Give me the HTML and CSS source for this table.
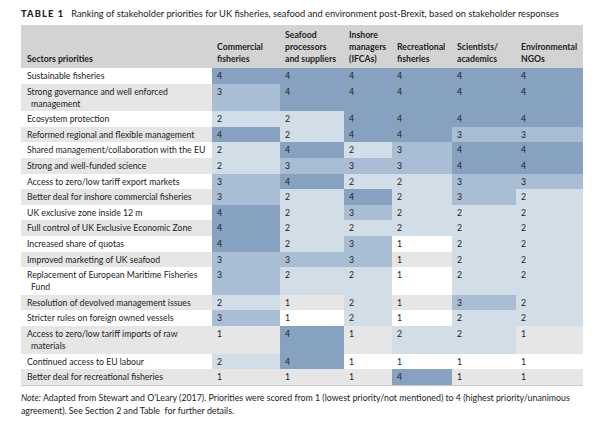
FILE: index.html
```html
<!DOCTYPE html>
<html>
<head>
<meta charset="utf-8">
<link rel="stylesheet" href="styles.css">
</head>
<body>
<div class="page">
  <div class="caption"><span class="label">TABLE 1</span><span class="ctext">Ranking of stakeholder priorities for UK fisheries, seafood and environment post-Brexit, based on stakeholder responses</span></div>
  <table class="tbl">
    <colgroup>
      <col class="c0"><col class="c1"><col class="c2"><col class="c3"><col class="c4"><col class="c5"><col class="c6">
    </colgroup>
    <thead>
      <tr>
        <th>Sectors priorities</th>
        <th>Commercial<br>fisheries</th>
        <th>Seafood<br>processors<br>and suppliers</th>
        <th>Inshore<br>managers<br>(IFCAs)</th>
        <th>Recreational<br>fisheries</th>
        <th>Scientists/<br>academics</th>
        <th>Environmental<br>NGOs</th>
      </tr>
    </thead>
    <tbody>
      <tr><td class="lbl">Sustainable fisheries</td><td class="v4">4</td><td class="v4">4</td><td class="v4">4</td><td class="v4">4</td><td class="v4">4</td><td class="v4">4</td></tr>
      <tr class="alt"><td class="lbl">Strong governance and well enforced management</td><td class="v3">3</td><td class="v4">4</td><td class="v4">4</td><td class="v4">4</td><td class="v4">4</td><td class="v4">4</td></tr>
      <tr><td class="lbl">Ecosystem protection</td><td class="v2">2</td><td class="v2">2</td><td class="v4">4</td><td class="v4">4</td><td class="v4">4</td><td class="v4">4</td></tr>
      <tr class="alt"><td class="lbl">Reformed regional and flexible management</td><td class="v4">4</td><td class="v2">2</td><td class="v4">4</td><td class="v4">4</td><td class="v3">3</td><td class="v3">3</td></tr>
      <tr><td class="lbl">Shared management/collaboration with the EU</td><td class="v2">2</td><td class="v4">4</td><td class="v2">2</td><td class="v3">3</td><td class="v4">4</td><td class="v4">4</td></tr>
      <tr class="alt"><td class="lbl">Strong and well-funded science</td><td class="v2">2</td><td class="v3">3</td><td class="v3">3</td><td class="v3">3</td><td class="v4">4</td><td class="v4">4</td></tr>
      <tr><td class="lbl">Access to zero/low tariff export markets</td><td class="v3">3</td><td class="v4">4</td><td class="v2">2</td><td class="v2">2</td><td class="v3">3</td><td class="v3">3</td></tr>
      <tr class="alt"><td class="lbl">Better deal for inshore commercial fisheries</td><td class="v3">3</td><td class="v2">2</td><td class="v4">4</td><td class="v2">2</td><td class="v3">3</td><td class="v2">2</td></tr>
      <tr><td class="lbl">UK exclusive zone inside 12 m</td><td class="v4">4</td><td class="v2">2</td><td class="v3">3</td><td class="v2">2</td><td class="v2">2</td><td class="v2">2</td></tr>
      <tr class="alt"><td class="lbl">Full control of UK Exclusive Economic Zone</td><td class="v4">4</td><td class="v2">2</td><td class="v2">2</td><td class="v2">2</td><td class="v2">2</td><td class="v2">2</td></tr>
      <tr><td class="lbl">Increased share of quotas</td><td class="v4">4</td><td class="v2">2</td><td class="v3">3</td><td class="v1">1</td><td class="v2">2</td><td class="v2">2</td></tr>
      <tr class="alt"><td class="lbl">Improved marketing of UK seafood</td><td class="v3">3</td><td class="v3">3</td><td class="v3">3</td><td class="v1">1</td><td class="v2">2</td><td class="v2">2</td></tr>
      <tr><td class="lbl">Replacement of European Maritime Fisheries Fund</td><td class="v3">3</td><td class="v2">2</td><td class="v2">2</td><td class="v1">1</td><td class="v2">2</td><td class="v2">2</td></tr>
      <tr class="alt"><td class="lbl">Resolution of devolved management issues</td><td class="v2">2</td><td class="v1">1</td><td class="v2">2</td><td class="v1">1</td><td class="v3">3</td><td class="v2">2</td></tr>
      <tr><td class="lbl">Stricter rules on foreign owned vessels</td><td class="v3">3</td><td class="v1">1</td><td class="v2">2</td><td class="v1">1</td><td class="v2">2</td><td class="v2">2</td></tr>
      <tr class="alt"><td class="lbl">Access to zero/low tariff imports of raw materials</td><td class="v1">1</td><td class="v4">4</td><td class="v1">1</td><td class="v2">2</td><td class="v2">2</td><td class="v1">1</td></tr>
      <tr><td class="lbl">Continued access to EU labour</td><td class="v2">2</td><td class="v4">4</td><td class="v1">1</td><td class="v1">1</td><td class="v1">1</td><td class="v1">1</td></tr>
      <tr class="alt last"><td class="lbl">Better deal for recreational fisheries</td><td class="v1">1</td><td class="v1">1</td><td class="v1">1</td><td class="v4">4</td><td class="v1">1</td><td class="v1">1</td></tr>
    </tbody>
  </table>
  <p class="note"><em>Note:</em> Adapted from Stewart and O’Leary (2017). Priorities were scored from 1 (lowest priority/not mentioned) to 4 (highest priority/unanimous agreement). See Section 2 and Table&nbsp; for further details.</p>
</div>
</body>
</html>
```
FILE: styles.css
```css
html, body {
  margin: 0;
  padding: 0;
  background: #ffffff;
}
body {
  font-family: Lato, "Noto Sans", "Liberation Sans", sans-serif;
  color: #222222;
}
.page {
  padding: 8px 0 0 21px;
  width: 562px;
}
.caption {
  font-size: 9.3px;
  line-height: 11px;
  height: 17px;
  white-space: nowrap;
}
.caption .label {
  font-weight: 900;
  letter-spacing: 1.1px;
  margin-right: 7px;
}
.tbl {
  border-collapse: collapse;
  table-layout: fixed;
  width: 562px;
  font-size: 8.7px;
  line-height: 12px;
}
.c0 { width: 191px; }
.c1 { width: 68px; }
.c2 { width: 64px; }
.c3 { width: 48px; }
.c4 { width: 60px; }
.c5 { width: 64px; }
.c6 { width: 67px; }
.tbl th {
  background: #d3d3d3;
  font-weight: 700;
  text-align: left;
  vertical-align: bottom;
  padding: 4px 0 3px 5px;
  white-space: nowrap;
}
.tbl th:first-child { padding-left: 6px; }
.tbl td {
  vertical-align: top;
  padding: 2px 0 1.6px 5px;
  background: #ffffff;
}
.tbl tr.alt td { background: #e6e6e6; }
.tbl td.lbl {
  padding-left: 10px;
  text-indent: -4px;
  padding-right: 6px;
}
.tbl tr td.v2 { background: #d2dee7; }
.tbl tr td.v3 { background: #a9bdd4; }
.tbl tr td.v4 { background: #87a1c0; }
.tbl tr.last td { border-bottom: 1px solid #c8c8c8; }
.note {
  margin: 5px 0 0 0;
  font-size: 8.8px;
  line-height: 13px;
  color: #222222;
}
```
